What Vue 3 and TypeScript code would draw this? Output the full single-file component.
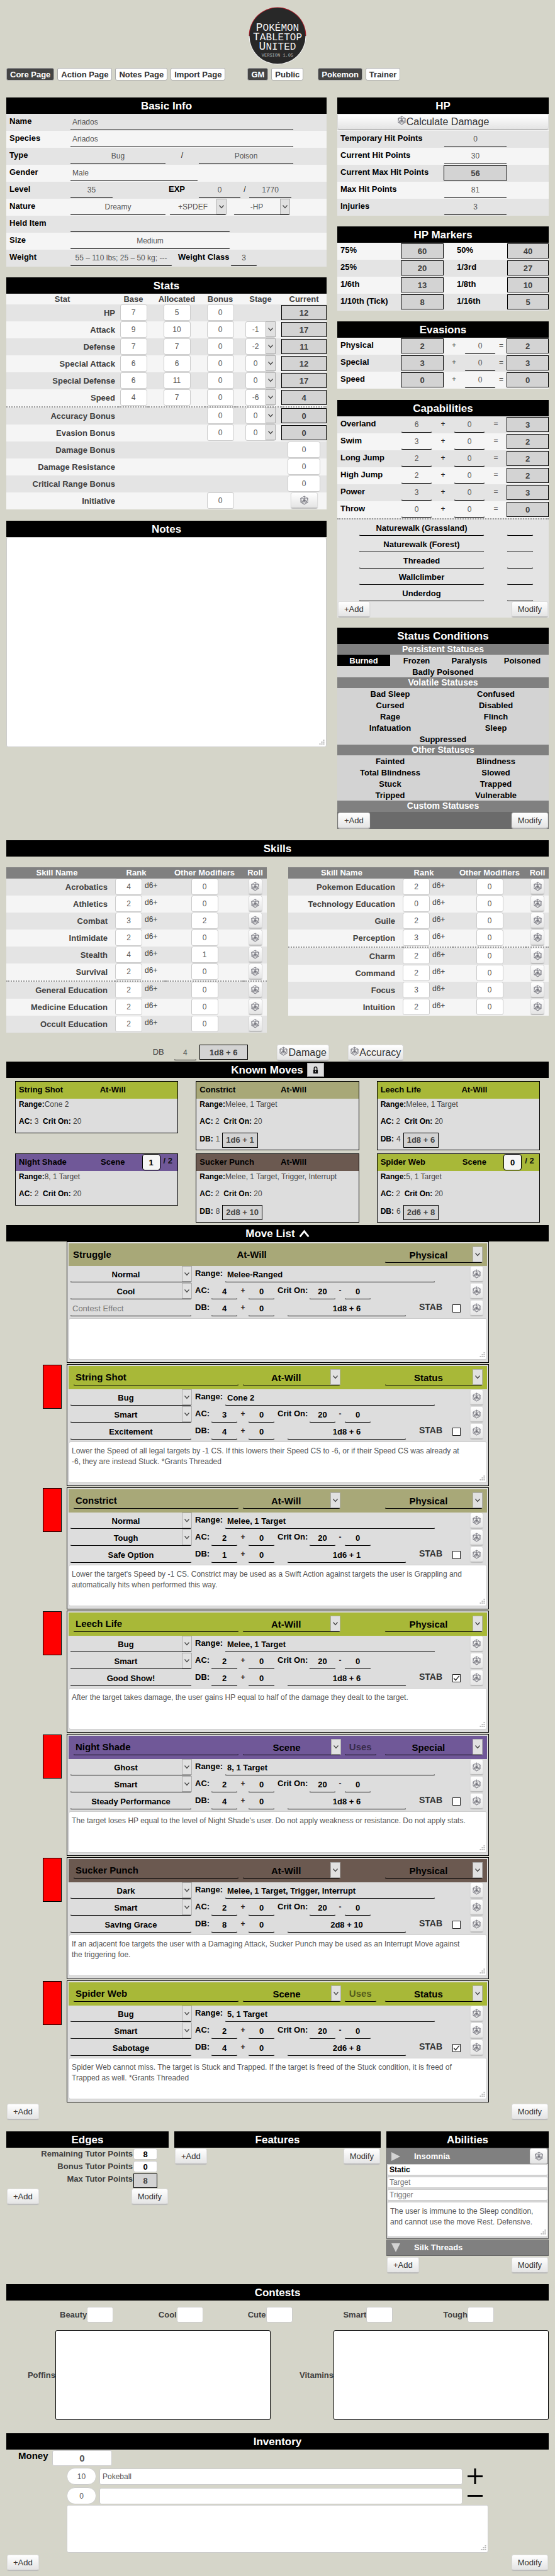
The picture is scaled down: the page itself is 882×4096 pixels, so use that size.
<script setup lang="ts">
interface Skill { name: string; rank: number; mod: number; rule?: boolean }
interface Move {
  name: string; freq: string; cls: string; type: string; tone: string; contest: string; effect: string
  range: string; ac: number; db: number; dice: string; stab: boolean; uses?: boolean; fixed?: boolean; text: string
}
interface Card { name: string; freq: string; tone: string; range: string; ac: number; db?: number; dice?: string; used?: number }

const navGroups = [
  { id: 'pages', items: ['Core Page', 'Action Page', 'Notes Page', 'Import Page'] },
  { id: 'access', items: ['GM', 'Public'] },
  { id: 'kind', items: ['Pokemon', 'Trainer'] },
]

const stats = [
  { name: 'HP', base: 7, alloc: 5, bonus: 0, stage: '', current: 12 },
  { name: 'Attack', base: 9, alloc: 10, bonus: 0, stage: '-1', current: 17 },
  { name: 'Defense', base: 7, alloc: 7, bonus: 0, stage: '-2', current: 11 },
  { name: 'Special Attack', base: 6, alloc: 6, bonus: 0, stage: '0', current: 12 },
  { name: 'Special Defense', base: 6, alloc: 11, bonus: 0, stage: '0', current: 17 },
  { name: 'Speed', base: 4, alloc: 7, bonus: 0, stage: '-6', current: 4 },
]
const rollBonuses = ['Accuracy Bonus', 'Evasion Bonus']
const flatBonuses = ['Damage Bonus', 'Damage Resistance', 'Critical Range Bonus']

const hitPoints = [
  { name: 'Temporary Hit Points', value: 0 },
  { name: 'Current Hit Points', value: 30 },
  { name: 'Current Max Hit Points', value: 56, computed: true },
  { name: 'Max Hit Points', value: 81 },
  { name: 'Injuries', value: 3 },
]
const markers = [
  [{ name: '75%', value: 60 }, { name: '50%', value: 40 }],
  [{ name: '25%', value: 20 }, { name: '1/3rd', value: 27 }],
  [{ name: '1/6th', value: 13 }, { name: '1/8th', value: 10 }],
  [{ name: '1/10th (Tick)', value: 8 }, { name: '1/16th', value: 5 }],
]
const evasions = [
  { name: 'Physical', value: 2 }, { name: 'Special', value: 3 }, { name: 'Speed', value: 0 },
]
const capabilities = [
  { name: 'Overland', base: 6, total: 3 }, { name: 'Swim', base: 3, total: 2 },
  { name: 'Long Jump', base: 2, total: 2 }, { name: 'High Jump', base: 2, total: 2 },
  { name: 'Power', base: 3, total: 3 }, { name: 'Throw', base: 0, total: 0 },
]
const traits = ['Naturewalk (Grassland)', 'Naturewalk (Forest)', 'Threaded', 'Wallclimber', 'Underdog']

const statuses = [
  { title: 'Persistent Statuses', rows: [['Burned', 'Frozen', 'Paralysis', 'Poisoned'], ['Badly Poisoned']] },
  { title: 'Volatile Statuses', rows: [['Bad Sleep', 'Confused'], ['Cursed', 'Disabled'], ['Rage', 'Flinch'], ['Infatuation', 'Sleep'], ['Suppressed']] },
  { title: 'Other Statuses', rows: [['Fainted', 'Blindness'], ['Total Blindness', 'Slowed'], ['Stuck', 'Trapped'], ['Tripped', 'Vulnerable']] },
]

const skillTables: { id: string; skills: Skill[] }[] = [
  { id: 'body-skills', skills: [
    { name: 'Acrobatics', rank: 4, mod: 0 }, { name: 'Athletics', rank: 2, mod: 0 },
    { name: 'Combat', rank: 3, mod: 2 }, { name: 'Intimidate', rank: 2, mod: 0 },
    { name: 'Stealth', rank: 4, mod: 1 }, { name: 'Survival', rank: 2, mod: 0, rule: true },
    { name: 'General Education', rank: 2, mod: 0 }, { name: 'Medicine Education', rank: 2, mod: 0 },
    { name: 'Occult Education', rank: 2, mod: 0 },
  ] },
  { id: 'mind-skills', skills: [
    { name: 'Pokemon Education', rank: 2, mod: 0 }, { name: 'Technology Education', rank: 0, mod: 0 },
    { name: 'Guile', rank: 2, mod: 0 }, { name: 'Perception', rank: 3, mod: 0, rule: true },
    { name: 'Charm', rank: 2, mod: 0 }, { name: 'Command', rank: 2, mod: 0 },
    { name: 'Focus', rank: 3, mod: 0 }, { name: 'Intuition', rank: 2, mod: 0 },
  ] },
]

const cards: Card[] = [
  { name: 'String Shot', freq: 'At-Will', tone: 'bug', range: 'Cone 2', ac: 3 },
  { name: 'Constrict', freq: 'At-Will', tone: 'normal', range: 'Melee, 1 Target', ac: 2, db: 1, dice: '1d6 + 1' },
  { name: 'Leech Life', freq: 'At-Will', tone: 'bug', range: 'Melee, 1 Target', ac: 2, db: 4, dice: '1d8 + 6' },
  { name: 'Night Shade', freq: 'Scene', tone: 'ghost', range: '8, 1 Target', ac: 2, used: 1 },
  { name: 'Sucker Punch', freq: 'At-Will', tone: 'dark', range: 'Melee, 1 Target, Trigger, Interrupt', ac: 2, db: 8, dice: '2d8 + 10' },
  { name: 'Spider Web', freq: 'Scene', tone: 'bug', range: '5, 1 Target', ac: 2, db: 6, dice: '2d6 + 8', used: 0 },
]

const moves: Move[] = [
  { name: 'Struggle', freq: 'At-Will', cls: 'Physical', type: 'Normal', tone: 'normal', contest: 'Cool', effect: '', range: 'Melee-Ranged', ac: 4, db: 4, dice: '1d8 + 6', stab: false, fixed: true, text: '' },
  { name: 'String Shot', freq: 'At-Will', cls: 'Status', type: 'Bug', tone: 'bug', contest: 'Smart', effect: 'Excitement', range: 'Cone 2', ac: 3, db: 4, dice: '1d8 + 6', stab: false, text: 'Lower the Speed of all legal targets by -1 CS. If this lowers their Speed CS to -6, or if their Speed CS was already at\n-6, they are instead Stuck. *Grants Threaded' },
  { name: 'Constrict', freq: 'At-Will', cls: 'Physical', type: 'Normal', tone: 'normal', contest: 'Tough', effect: 'Safe Option', range: 'Melee, 1 Target', ac: 2, db: 1, dice: '1d6 + 1', stab: false, text: "Lower the target's Speed by -1 CS. Constrict may be used as a Swift Action against targets the user is Grappling and\nautomatically hits when performed this way." },
  { name: 'Leech Life', freq: 'At-Will', cls: 'Physical', type: 'Bug', tone: 'bug', contest: 'Smart', effect: 'Good Show!', range: 'Melee, 1 Target', ac: 2, db: 2, dice: '1d8 + 6', stab: true, text: 'After the target takes damage, the user gains HP equal to half of the damage they dealt to the target.' },
  { name: 'Night Shade', freq: 'Scene', cls: 'Special', type: 'Ghost', tone: 'ghost', contest: 'Smart', effect: 'Steady Performance', range: '8, 1 Target', ac: 2, db: 4, dice: '1d8 + 6', stab: false, uses: true, text: "The target loses HP equal to the level of Night Shade's user. Do not apply weakness or resistance. Do not apply stats." },
  { name: 'Sucker Punch', freq: 'At-Will', cls: 'Physical', type: 'Dark', tone: 'dark', contest: 'Smart', effect: 'Saving Grace', range: 'Melee, 1 Target, Trigger, Interrupt', ac: 2, db: 8, dice: '2d8 + 10', stab: false, text: 'If an adjacent foe targets the user with a Damaging Attack, Sucker Punch may be used as an Interrupt Move against\nthe triggering foe.' },
  { name: 'Spider Web', freq: 'Scene', cls: 'Status', type: 'Bug', tone: 'bug', contest: 'Smart', effect: 'Sabotage', range: '5, 1 Target', ac: 2, db: 4, dice: '2d6 + 8', stab: true, uses: true, text: 'Spider Web cannot miss. The target is Stuck and Trapped. If the target is freed of the Stuck condition, it is freed of\nTrapped as well. *Grants Threaded' },
]

const tutorPoints = [{ name: 'Remaining Tutor Points', value: 8 }, { name: 'Bonus Tutor Points', value: 0 }]
const insomnia = 'The user is immune to the Sleep condition,\nand cannot use the move Rest. Defensive.'
const contests = ['Beauty', 'Cool', 'Cute', 'Smart', 'Tough']
const items = [{ qty: 10, name: 'Pokeball' }, { qty: 0, name: '' }]
</script>

<template>
  <svg class="defs" aria-hidden="true">
    <symbol id="d20" viewBox="0 0 16 16">
      <g fill="none" stroke="#6f6f78" stroke-width="0.8" stroke-linejoin="round">
        <path d="M8 1 14 4.5V11.5L8 15 2 11.5V4.5Z" />
        <path d="M8 4.500 11.800 10.800H4.200Z" />
        <path d="M8 1V4.500M14 4.500 8 4.500 2 4.500M14 4.500 11.800 10.800 14 11.500M2 4.500 4.200 10.800 2 11.500M8 15 4.200 10.800M8 15 11.800 10.800" />
        <path d="M8 7 9.500 9.500H6.500Z" stroke-width="1.400" />
      </g>
    </symbol>
    <symbol id="chevron" viewBox="0 0 10 10"><path d="M1.500 3 5 7 8.500 3" fill="none" stroke="#444" stroke-width="1.200" /></symbol>
    <symbol id="grip" viewBox="0 0 9 9"><path d="M6.500 0h2v2h-2zM6.500 3h2v2h-2zM3.500 3h2v2h-2zM6.500 6h2v2h-2zM3.500 6h2v2h-2zM.5 6h2v2h-2z" fill="#bbb" /></symbol>
  </svg>
  <main class="page">
    <svg class="logo" viewBox="0 0 92 92" role="img" aria-label="Pokémon Tabletop United">
      <circle cx="46" cy="46" r="45.500" fill="#f2f2f2" />
      <path d="M0.500 46a45.500 45.500 0 0 1 91 0z" fill="#a8202a" />
      <circle cx="46" cy="46" r="44.500" fill="#282828" />
      <g fill="#f4f4f4" font-family="'Liberation Mono', monospace" text-anchor="middle">
        <text x="46" y="37.500" font-size="16"><tspan font-size="18">P</tspan>OKÉMON</text>
        <text x="46" y="53" font-size="16"><tspan font-size="18">T</tspan>ABLETOP</text>
        <text x="46" y="67.500" font-size="16"><tspan font-size="18">U</tspan>NITED</text>
        <text x="46" y="79" font-size="7" fill="#bbb">VERSION 1.05</text>
      </g>
    </svg>
    <nav class="nav">
      <div v-for="g in navGroups" :key="g.id" :class="['tabs', g.id]">
        <button v-for="(t, i) in g.items" :key="t" type="button" :class="['tab', { on: i === 0 }]">{{ t }}</button>
      </div>
    </nav>

    <div class="core">
      <div>
        <section>
          <h2>Basic Info</h2>
          <div class="stripes info">
            <div class="row r-one"><label for="name">Name</label><input id="name" class="line" value="Ariados"></div>
            <div class="row r-one"><label for="species">Species</label><input id="species" class="line" value="Ariados"></div>
            <div class="row r-type"><label for="type1">Type</label><input id="type1" class="line mid" value="Bug"><span class="sym">/</span><input class="line mid" aria-label="Second type" value="Poison"></div>
            <div class="row r-gender"><label for="gender">Gender</label><input id="gender" class="line" value="Male"></div>
            <div class="row r-level"><label for="level">Level</label><input id="level" class="line mid" value="35"><label for="exp" class="exp">EXP</label><input id="exp" class="line mid" value="0"><span class="sym">/</span><input class="line mid" aria-label="Next level" value="1770"></div>
            <div class="row r-nature">
              <label for="nature">Nature</label><input id="nature" class="line mid" value="Dreamy"><i></i>
              <span class="pick"><select class="line" aria-label="Raised stat"><option>+SPDEF</option></select><svg><use href="#chevron" /></svg></span><i></i>
              <span class="pick"><select class="line" aria-label="Lowered stat"><option>-HP</option></select><svg><use href="#chevron" /></svg></span>
            </div>
            <div class="row r-held"><label for="held">Held Item</label><input id="held" class="line"></div>
            <div class="row r-held"><label for="size">Size</label><input id="size" class="line mid" value="Medium"></div>
            <div class="row r-weight"><label for="weight">Weight</label><input id="weight" class="line mid" value="55 – 110 lbs; 25 – 50 kg; ---"><label for="wclass" class="wc">Weight Class</label><input id="wclass" class="line mid" value="3"></div>
          </div>
        </section>

        <section class="g17">
          <h2>Stats</h2>
          <table class="stats">
            <colgroup><col class="a"><col class="b"><col class="c"><col class="b"><col class="d"><col class="e"></colgroup>
            <thead><tr><th>Stat</th><th>Base</th><th>Allocated</th><th>Bonus</th><th class="st">Stage</th><th>Current</th></tr></thead>
            <tbody>
              <tr v-for="s in stats" :key="s.name" :class="{ rule: s.name === 'Speed' }">
                <th scope="row">{{ s.name }}</th>
                <td><input class="box" :aria-label="s.name + ' base'" :value="s.base"></td>
                <td><input class="box" :aria-label="s.name + ' allocated'" :value="s.alloc"></td>
                <td><input class="box" :aria-label="s.name + ' bonus'" :value="s.bonus"></td>
                <td class="st"><span v-if="s.stage" class="pick small"><select class="box" :aria-label="s.name + ' stage'"><option>{{ s.stage }}</option></select><svg><use href="#chevron" /></svg></span></td>
                <td><input class="calc" readonly :aria-label="s.name + ' current'" :value="s.current"></td>
              </tr>
              <tr v-for="b in rollBonuses" :key="b">
                <th scope="row">{{ b }}</th><td></td><td></td>
                <td><input class="box" :aria-label="b" value="0"></td>
                <td class="st"><span class="pick small"><select class="box" :aria-label="b + ' stage'"><option>0</option></select><svg><use href="#chevron" /></svg></span></td>
                <td><input class="calc" readonly :aria-label="b + ' current'" value="0"></td>
              </tr>
              <tr v-for="b in flatBonuses" :key="b">
                <th scope="row">{{ b }}</th><td></td><td></td><td></td><td></td>
                <td><input class="box wide" :aria-label="b" value="0"></td>
              </tr>
              <tr>
                <th scope="row">Initiative</th><td></td><td></td>
                <td><input class="box" aria-label="Initiative bonus" value="0"></td><td></td>
                <td><button type="button" class="btn roll init" aria-label="Roll initiative"><svg><use href="#d20" /></svg></button></td>
              </tr>
            </tbody>
          </table>
        </section>

        <section class="g18">
          <h2 id="notes-title">Notes</h2>
          <div class="area notes"><textarea aria-labelledby="notes-title"></textarea><svg><use href="#grip" /></svg></div>
        </section>
      </div>

      <div>
        <section>
          <h2>HP</h2>
          <div class="stripes odd">
            <div class="row single"><button type="button" class="btn big"><svg><use href="#d20" /></svg>Calculate Damage</button></div>
            <div v-for="(h, i) in hitPoints" :key="h.name" class="row r-hp">
              <label :for="'hp' + i">{{ h.name }}</label>
              <input :id="'hp' + i" :class="h.computed ? 'calc flat' : 'line mid'" :readonly="h.computed" :value="h.value">
            </div>
          </div>
        </section>
        <section class="g17">
          <h2>HP Markers</h2>
          <div class="stripes odd">
            <div v-for="(pair, i) in markers" :key="i" class="row r-mark">
              <template v-for="(m, j) in pair" :key="m.name">
                <label :for="'mk' + i + j" :class="{ second: j === 1 }">{{ m.name }}</label>
                <input :id="'mk' + i + j" class="calc flat" readonly :value="m.value">
              </template>
            </div>
          </div>
        </section>
        <section class="g17">
          <h2>Evasions</h2>
          <div class="stripes odd">
            <div v-for="(e, i) in evasions" :key="e.name" class="row r-eva">
              <label :for="'ev' + i">{{ e.name }}</label>
              <input :id="'ev' + i" class="calc flat" readonly :value="e.value"><span class="sym">+</span>
              <input class="line mid" :aria-label="e.name + ' bonus'" value="0"><span class="sym">=</span>
              <input class="calc flat" readonly :aria-label="e.name + ' total'" :value="e.value">
            </div>
          </div>
        </section>
        <section class="g18">
          <h2>Capabilities</h2>
          <div class="stripes">
            <div v-for="(c, i) in capabilities" :key="c.name" class="row r-cap">
              <label :for="'cap' + i">{{ c.name }}</label>
              <input :id="'cap' + i" class="line mid" :value="c.base"><span class="sym">+</span>
              <input class="line mid" :aria-label="c.name + ' bonus'" value="0"><span class="sym">=</span>
              <input class="calc flat" readonly :aria-label="c.name + ' total'" :value="c.total">
            </div>
          </div>
          <div class="traits">
            <div v-for="t in traits" :key="t" class="trait">
              <input class="line mid strong" aria-label="Capability" :value="t"><input class="line" :aria-label="t + ' value'">
            </div>
            <div class="ends"><button type="button" class="btn">+Add</button><button type="button" class="btn">Modify</button></div>
          </div>
        </section>
        <section class="g16 status">
          <h2>Status Conditions</h2>
          <template v-for="s in statuses" :key="s.title">
            <h3>{{ s.title }}</h3>
            <div v-for="(r, i) in s.rows" :key="i" class="srow">
              <button v-for="c in r" :key="c" type="button" :class="{ on: c === 'Burned' }">{{ c }}</button>
            </div>
          </template>
          <h3 class="tall">Custom Statuses</h3>
          <div class="ends dim"><button type="button" class="btn">+Add</button><button type="button" class="btn">Modify</button></div>
        </section>
      </div>
    </div>

    <section class="g18">
      <h2>Skills</h2>
      <div class="skills">
        <table v-for="t in skillTables" :key="t.id" :class="['skill', t.id]">
          <colgroup><col class="a"><col class="b"><col class="c"><col class="d"></colgroup>
          <thead><tr><th class="nm">Skill Name</th><th class="rk">Rank</th><th>Other Modifiers</th><th>Roll</th></tr></thead>
          <tbody>
            <tr v-for="s in t.skills" :key="s.name" :class="{ rule: s.rule }">
              <th scope="row" class="nm">{{ s.name }}</th>
              <td><div class="rank"><input class="box" :aria-label="s.name + ' rank'" :value="s.rank"><span>d6+</span></div></td>
              <td><input class="box" :aria-label="s.name + ' modifier'" :value="s.mod"></td>
              <td><button type="button" class="btn roll" :aria-label="'Roll ' + s.name"><svg><use href="#d20" /></svg></button></td>
            </tr>
          </tbody>
        </table>
      </div>
    </section>

    <div class="dbrow">
      <label for="db">DB</label><input id="db" class="line mid" value="4">
      <input class="calc flat" readonly aria-label="Damage roll" value="1d8 + 6">
      <button type="button" class="btn big dmg"><svg><use href="#d20" /></svg>Damage</button>
      <button type="button" class="btn big acc"><svg><use href="#d20" /></svg>Accuracy</button>
    </div>

    <section>
      <h2>Known Moves
        <button type="button" class="lock" aria-label="Lock"><svg viewBox="0 0 10 14"><path d="M2.500 7V4a2.500 2.500 0 0 1 5 0v3" fill="none" stroke="#111" stroke-width="1.600" /><path d="M1 6.500h8V13H1z" fill="#111" /><path d="M4.500 8.500h1v2.500h-1z" fill="#ddd" /></svg></button>
      </h2>
      <div class="cards">
        <article v-for="(c, i) in cards" :key="c.name" class="card">
          <header :class="c.tone">
            <span>{{ c.name }}</span><span class="fq">{{ c.freq }}</span>
            <span v-if="c.used !== undefined" class="used"><input :id="'used' + i" :aria-label="c.name + ' uses'" :value="c.used"><label :for="'used' + i">/ 2</label></span>
          </header>
          <p><b>Range:</b>{{ c.range }}</p>
          <p><b>AC:</b> {{ c.ac }} &nbsp;<b>Crit On:</b> 20</p>
          <p v-if="c.dice" class="dice"><b>DB:</b> {{ c.db }} <output>{{ c.dice }}</output></p>
        </article>
      </div>
    </section>

    <section>
      <h2>Move List <svg class="up" viewBox="0 0 16 12"><path d="M1.500 10.500 8 2.500l6.500 8" fill="none" stroke="#fff" stroke-width="2.600" /></svg></h2>
      <div v-for="(m, i) in moves" :key="m.name" class="entry">
        <button v-if="!m.fixed" type="button" class="red" :aria-label="'Mark ' + m.name"></button>
        <article :class="['move', { fixed: m.fixed }]">
          <header :class="m.tone">
            <template v-if="m.fixed"><strong>{{ m.name }}</strong><strong class="fx">{{ m.freq }}</strong></template>
            <template v-else>
              <input class="line nm" aria-label="Move name" :value="m.name">
              <span class="pick fq"><select class="line" aria-label="Frequency"><option>{{ m.freq }}</option></select><svg><use href="#chevron" /></svg></span>
              <input v-if="m.uses" class="line mid us" aria-label="Uses" placeholder="Uses">
            </template>
            <span class="pick cl"><select class="line" aria-label="Class"><option>{{ m.cls }}</option></select><svg><use href="#chevron" /></svg></span>
          </header>
          <div class="mrow m1">
            <span class="pick"><select class="line" aria-label="Type"><option>{{ m.type }}</option></select><svg><use href="#chevron" /></svg></span>
            <label :for="'rg' + i">Range:</label><input :id="'rg' + i" class="line" :value="m.range"><i></i>
            <button type="button" class="btn roll" aria-label="Roll"><svg><use href="#d20" /></svg></button>
          </div>
          <div class="mrow m2">
            <span class="pick"><select class="line" aria-label="Contest type"><option>{{ m.contest }}</option></select><svg><use href="#chevron" /></svg></span>
            <label :for="'ac' + i">AC:</label><input :id="'ac' + i" class="line mid" :value="m.ac"><span class="sym">+</span><input class="line mid" aria-label="AC bonus" value="0">
            <label :for="'cr' + i" class="crit">Crit On:</label><input :id="'cr' + i" class="line mid" value="20"><span class="sym">-</span><input class="line mid" aria-label="Crit bonus" value="0"><i></i>
            <button type="button" class="btn roll" aria-label="Roll accuracy"><svg><use href="#d20" /></svg></button>
          </div>
          <div class="mrow m3">
            <input class="line mid ef" aria-label="Contest Effect" placeholder="Contest Effect" :value="m.effect">
            <label :for="'db' + i">DB:</label><input :id="'db' + i" class="line mid" :value="m.db"><span class="sym">+</span><input class="line mid" aria-label="DB bonus" value="0"><i></i>
            <input class="line mid" aria-label="Damage" :value="m.dice"><i></i><label :for="'st' + i" class="stab">STAB</label><i></i>
            <span class="tick"><input :id="'st' + i" type="checkbox" :checked="m.stab"><svg viewBox="0 0 12 12"><path d="M2 6 4.700 9 10 2.500" fill="none" stroke="#222" stroke-width="1.200" /></svg></span>
            <button type="button" class="btn roll" aria-label="Roll damage"><svg><use href="#d20" /></svg></button>
          </div>
          <div class="area desc"><textarea :aria-label="m.name + ' description'" :value="m.text"></textarea><svg><use href="#grip" /></svg></div>
        </article>
      </div>
      <div class="ends"><button type="button" class="btn">+Add</button><button type="button" class="btn">Modify</button></div>
    </section>

    <div class="trio">
      <section>
        <h2>Edges</h2>
        <div class="tutor">
          <template v-for="(t, i) in tutorPoints" :key="t.name"><label :for="'tp' + i">{{ t.name }}</label><input :id="'tp' + i" class="box slim" :value="t.value"></template>
          <label for="tpmax">Max Tutor Points</label><input id="tpmax" class="calc flat" readonly value="8">
        </div>
        <div class="ends"><button type="button" class="btn">+Add</button><button type="button" class="btn">Modify</button></div>
      </section>
      <section>
        <h2>Features</h2>
        <div class="ends top"><button type="button" class="btn">+Add</button><button type="button" class="btn">Modify</button></div>
      </section>
      <section>
        <h2>Abilities</h2>
        <div class="ability">
          <div class="abar"><svg viewBox="0 0 14 14"><path d="M0 0 14 7 0 14z" fill="#d3d3d3" /></svg><span>Insomnia</span><button type="button" class="btn roll" aria-label="Roll Insomnia"><svg><use href="#d20" /></svg></button></div>
          <input class="box slim key" aria-label="Frequency" value="Static">
          <input class="box slim" aria-label="Target" placeholder="Target">
          <input class="box slim" aria-label="Trigger" placeholder="Trigger">
          <div class="area abtext"><textarea aria-label="Insomnia effect" :value="insomnia"></textarea><svg><use href="#grip" /></svg></div>
        </div>
        <div class="ability closed"><div class="abar"><svg viewBox="0 0 14 14"><path d="M0 0h14L7 14z" fill="#d3d3d3" /></svg><span>Silk Threads</span></div></div>
        <div class="ends abends"><button type="button" class="btn">+Add</button><button type="button" class="btn">Modify</button></div>
      </section>
    </div>

    <section class="g18">
      <h2>Contests</h2>
      <div class="contests"><div v-for="c in contests" :key="c"><label :for="'ct' + c">{{ c }}</label><input :id="'ct' + c" class="box"></div></div>
      <div class="treats">
        <label for="poffins">Poffins</label><textarea id="poffins"></textarea>
        <label for="vitamins">Vitamins</label><textarea id="vitamins"></textarea>
      </div>
    </section>

    <section class="g21">
      <h2>Inventory</h2>
      <div class="money"><label for="money">Money</label><input id="money" class="box" value="0"></div>
      <div class="inv">
        <div v-for="(it, i) in items" :key="i" class="item">
          <input class="box qty" aria-label="Quantity" :value="it.qty"><input class="box nm" aria-label="Item" :value="it.name">
          <button type="button" class="pm" :aria-label="i ? 'Remove item' : 'Add item'">
            <svg viewBox="0 0 24 25"><path :d="i ? 'M0 11h24v3H0z' : 'M0 11h10.500V0h3v11H24v3H13.500v11h-3V14H0z'" fill="#000" /></svg>
          </button>
        </div>
        <div class="area invtext"><textarea aria-label="Inventory notes"></textarea><svg><use href="#grip" /></svg></div>
      </div>
      <div class="ends invends"><button type="button" class="btn">+Add</button><button type="button" class="btn">Modify</button></div>
    </section>
  </main>
</template>

<style>
html, body { background: #d5d5c9; }
</style>

<style scoped>
* { box-sizing: border-box; }
.defs { position: absolute; width: 0; height: 0; }
.page { padding: 11px 10px; background: #d5d5c9; color: #404040; font: 13px/18px "Liberation Sans", Arial, sans-serif; }
input, select, textarea, button { font: 12px "Liberation Sans", Arial, sans-serif; color: #555; margin: 0; min-width: 0; border-radius: 3px; }
label, th { font-weight: bold; }
h2 { margin: 0; height: 26px; background: #000; color: #fff; font-size: 17px; line-height: 25px; text-align: center; display: flex; justify-content: center; align-items: center; gap: 6px; }
.g16 { margin-top: 16px; }
.g17 { margin-top: 17px; }
.g18 { margin-top: 18px; }
.g21 { margin-top: 21px; }

.logo { display: block; width: 92px; height: 92px; margin: 0 auto; }
.nav { display: flex; margin: 5px 0 27px; }
.tabs { display: flex; gap: 5px; }
.tabs.access { margin-left: 35px; }
.tabs.kind { margin-left: 23px; }
.tab { height: 20px; padding: 0 5px; border: 1px solid #aaa; background: #fff; color: #333; font-size: 13px; font-weight: bold; }
.tab.on { background: #444; color: #fff; }

.core { display: grid; grid-template-columns: minmax(0, 509fr) minmax(0, 336fr); gap: 17px; align-items: start; }
.row { display: grid; height: 27px; background: #f5f5f5; color: #000; }
.stripes .row:nth-child(odd) { background: #e4e4e4; }
.stripes.odd .row:nth-child(odd) { background: #f5f5f5; }
.stripes.odd .row:nth-child(even) { background: #e4e4e4; }
.row label { min-width: 0; padding-left: 5px; line-height: 24px; white-space: nowrap; }
.sym { text-align: center; line-height: 24px; }
.row .sym, .mrow .sym { font-size: 12px; color: #222; font-weight: bold; }
.row .sym { font-weight: normal; }

.line { width: 100%; height: 26px; padding: 0 3px; border: 1px solid transparent; border-bottom-color: #000; background: transparent; }
.mid { text-align: center; }
.box { display: block; width: 43px; height: 26px; margin: 0 auto; padding: 0; border: 1px solid #ccc; background: #fff; text-align: center; }
.calc { display: block; width: 100%; height: 24px; border: 1px solid #000; border-radius: 0; background: #d3d3d3; color: #404040; font-size: 13px; font-weight: bold; text-align: center; padding: 0; }
.pick { display: grid; grid-template-columns: minmax(0, 1fr) 16px; min-width: 0; }
.pick select { grid-area: 1 / 1 / 2 / 3; appearance: none; text-align: center; text-align-last: center; padding: 0 16px 0 0; width: 100%; }
.pick svg { grid-area: 1 / 2; width: 16px; height: 25px; padding: 0 2px; background: #e1e1e1; border: 1px solid #adadad; pointer-events: none; }
.btn { display: flex; align-items: center; justify-content: center; height: 25px; border: 1px solid #ddd; border-bottom-color: #bbb; background: linear-gradient(#fff, #e4e4e4); box-shadow: 0 1px 1px #bbb; color: #333; font-size: 13px; padding: 0 9px; white-space: nowrap; }
.btn.big { font-size: 16px; padding: 0 2px; }
.btn svg { width: 15px; height: 15px; flex: none; }
.btn.big svg { margin-bottom: 4px; }
.btn.roll { width: 22px; padding: 0; margin: 0 auto; }

.r-one { grid-template-columns: 101fr 356fr 52fr; }
.r-type { grid-template-columns: 101fr 153fr 51fr 152fr 52fr; }
.r-gender { grid-template-columns: 101fr 204fr 204fr; }
.r-level { grid-template-columns: 101fr 69fr 135fr 68fr 12fr 69fr 55fr; }
.row .exp { text-align: right; padding-right: 21px; }
.r-nature { grid-template-columns: 101fr 153fr 5fr 91fr 11fr 90fr 58fr; }
.r-held { grid-template-columns: 101fr 255fr 153fr; }
.r-weight { grid-template-columns: 101fr 163fr 92fr 43fr 110fr; }
.row .wc { padding-left: 9px; }

table { width: 100%; border-collapse: separate; border-spacing: 0; table-layout: fixed; }
td, th { padding: 0; vertical-align: middle; }
td { vertical-align: top; }
tbody tr { height: 27px; background: #f5f5f5; }
tbody tr:nth-child(odd) { background: #e4e4e4; }
tbody tr.rule > * { border-bottom: 2px dotted #999; }
tbody tr.rule { height: 29px; }
.stats thead th { height: 17px; line-height: 17px; background: #f5f5f5; }
.stats tbody th { text-align: right; padding-right: 5px; white-space: nowrap; }
.stats .a { width: 178px; }
.stats .b { width: 48px; }
.stats .c { width: 90px; }
.stats .d { width: 73px; }
.stats .e { width: 72px; }
.stats .st { padding-left: 7px; }
.stats .calc { margin-top: 1px; }
.box.wide { width: 52px; }
.small { width: 48px; margin: 0 auto; }
.btn.init { width: 43px; }

.area { display: grid; }
.area textarea { grid-area: 1 / 1; width: 100%; height: 100%; resize: none; border: 1px solid #ccc; background: #fff; padding: 6px 4px; font-size: 12px; line-height: 17px; overflow: hidden; }
.area svg { grid-area: 1 / 1; place-self: end; width: 9px; height: 9px; margin: 0 3px 3px 0; pointer-events: none; }
.notes { height: 334px; }

.single .btn { width: 100%; }
.r-hp { grid-template-columns: 169fr 101fr 66fr; }
.r-mark { grid-template-columns: 101fr 68fr 101fr 66fr; }
.row .second { padding-left: 21px; }
.r-eva { grid-template-columns: 101fr 68fr 33fr 50fr 17fr 67fr; }
.r-cap { grid-template-columns: 101fr 50fr 34fr 50fr 34fr 67fr; }
.row .calc { margin-top: 1px; }
.traits { background: #e4e4e4; border-top: 2px dotted #999; }
.trait { display: grid; grid-template-columns: 200fr 43fr; column-gap: 35px; padding: 0 24px 0 34px; height: 26px; }
.strong { font-size: 13px; font-weight: bold; color: #000; }
.ends { display: flex; justify-content: space-between; padding: 0 1px; }
.traits .ends { height: 26px; }
.status h3 { margin: 0; height: 17px; background: #808080; color: #fff; font-size: 14px; line-height: 17px; text-align: center; }
.status h3.tall { height: 18px; }
.srow { display: flex; background: #d3d3d3; }
.srow button { flex: 1; height: 18px; padding: 0; border: 0; border-radius: 0; background: none; color: #000; font-size: 13px; font-weight: bold; }
.srow .on { background: #000; color: #fff; }
.ends.dim { background: #6b6b6b; height: 27px; padding-top: 1px; }

.skills { display: grid; grid-template-columns: minmax(0, 1fr) minmax(0, 1fr); gap: 34px; padding-top: 17px; align-items: start; }
.skill thead th { height: 18px; line-height: 18px; background: #808080; color: #fff; white-space: nowrap; }
.body-skills .a { width: 173px; }
.body-skills .b { width: 80px; }
.body-skills .c { width: 124px; }
.body-skills .d { width: 37px; }
.mind-skills .a { width: 182px; }
.mind-skills .b { width: 80px; }
.mind-skills .c { width: 116px; }
.mind-skills .d { width: 36px; }
.skill .nm { padding-right: 12px; }
.skill .rk { padding-right: 13px; }
.skill tbody .nm { text-align: right; white-space: nowrap; }
.rank { display: flex; gap: 4px; line-height: 23px; }
.rank span { font-size: 12px; }
.rank .box { margin: 0; }

.dbrow { display: flex; align-items: flex-start; margin: 19px 0 2px; padding-left: 27%; height: 25px; }
.dbrow label { width: 33px; font-weight: normal; line-height: 24px; padding-right: 16px; }
.dbrow .line { width: 37px; height: 25px; }
.dbrow .calc { width: 77px; margin-left: 4px; }
.dmg { margin-left: 46px; width: 83px; }
.acc { margin-left: 30px; width: 88px; }
.lock { width: 27px; height: 22px; display: grid; place-items: center; padding: 0; border: 1px solid #aaa; border-radius: 0; background: #ddd; }
.lock svg { width: 9px; height: 13px; }
.up { width: 17px; height: 13px; }

.bug { background: #a8b838; }
.normal { background: #a8a878; }
.ghost { background: #705898; }
.dark { background: #6b5950; }
.cards { display: grid; grid-template-columns: repeat(3, 1fr); gap: 5px 28px; padding: 5px 14px 4px; align-items: start; }
.card { border: 1px solid #000; background: #ddd; }
.card header { display: grid; grid-template-columns: 112fr 80fr 65fr; height: 27px; line-height: 25px; color: #000; font-weight: bold; padding-left: 5px; white-space: nowrap; }
.card .fq { text-align: center; }
.used { display: flex; gap: 5px; line-height: 22px; padding-left: 7px; }
.used input { width: 29px; height: 26px; border: 1px solid #000; border-radius: 4px; background: #f5f5f5; color: #000; font-size: 13px; font-weight: bold; text-align: center; padding: 0; }
.used label { color: #111; }
.card p { margin: 0 0 9px; padding-left: 5px; height: 18px; font-size: 12px; color: #444; white-space: nowrap; }
.card b { color: #000; }
.card .dice { height: 24px; margin-bottom: 3px; display: flex; gap: 4px; line-height: 21px; }
.card output { border: 1px solid #000; background: #d3d3d3; padding: 0 5px; font-size: 13px; font-weight: bold; line-height: 22px; }

.entry { display: grid; grid-template-columns: 96fr 671fr 95fr; margin-bottom: 2px; }
.red { grid-column: 1; justify-self: end; width: 30px; height: 70px; margin: 1px 8px 0 0; border: 1px solid #000; border-radius: 0; background: #f00; padding: 0; }
.move { grid-column: 2; border: 1px solid #000; background: #ddd; padding: 2px 2px 4px; color: #000; }
.move header { display: flex; padding: 5px 7px 6px; height: 37px; }
.move.fixed header { height: 36px; }
.move header .line, .move header strong { font-size: 15px; font-weight: bold; color: #000; line-height: 26px; }
.move header strong { width: 40%; }
.move header .fx { width: auto; }
.move .nm { flex: 257; width: auto; margin-right: 5px; }
.move .fq { width: 24%; }
.move .us { width: 8%; margin-left: 5px; padding: 0; }
.us::placeholder { color: #000; opacity: 0.5; }
.move .cl { width: 24%; margin-left: 12px; }
.move .fq:nth-last-child(2) { margin-right: 58px; }
.move .fx + .cl { margin-left: auto; }
.mrow { display: grid; height: 27px; padding: 0 6px 0 2px; white-space: nowrap; }
.mrow > :first-child { margin-right: 5px; }
.mrow label { line-height: 24px; }
.mrow .line { font-size: 13px; font-weight: bold; color: #000; }
.mrow input.ef { width: auto; }
.ef::placeholder { font-weight: normal; color: #777; opacity: 1; }
.ef:placeholder-shown { text-align: left; }
.m1 { grid-template-columns: 199fr 47fr 335fr 55fr 21fr; }
.m2 { grid-template-columns: 199fr 25fr 43fr 16fr 43fr 54fr 43fr 13fr 43fr 157fr 21fr; }
.m3 { grid-template-columns: 199fr 25fr 43fr 16fr 43fr 19fr 190fr 20fr 40fr 13fr 28fr 21fr; }
.mrow .crit { padding-left: 4px; }
.mrow .stab { font-size: 14px; color: #333; line-height: 22px; }
.mrow .btn.roll { width: 21px; }
.tick { display: grid; align-content: center; justify-content: start; }
.tick input { grid-area: 1 / 1; appearance: none; width: 13px; height: 13px; border: 1px solid #222; border-radius: 0; background: #fff; }
.tick svg { grid-area: 1 / 1; width: 13px; height: 13px; visibility: hidden; pointer-events: none; }
.tick input:checked + svg { visibility: visible; }
.desc { height: 66px; margin-top: 2px; }

.trio { display: grid; grid-template-columns: 258fr 328fr 258fr; gap: 9px; margin-top: 19px; align-items: start; }
.tutor { display: grid; grid-template-columns: 1fr 38px; padding: 1px 18px 1px 0; row-gap: 2px; text-align: right; }
.tutor .box { width: 100%; color: #000; font-weight: bold; font-size: 13px; }
.tutor label { padding-right: 1px; }
.tutor .calc { height: 23px; }
.slim { height: 18px; }
.top { padding-top: 1px; }
.ability { border: 1px solid #666; background: #d5d5d5; padding-bottom: 2px; display: grid; gap: 2px; }
.abar { display: grid; grid-template-columns: 36px 1fr 30px; align-items: center; height: 25px; margin-bottom: -2px; padding-left: 7px; background: #808080; color: #fff; font-weight: bold; }
.abar > svg { width: 14px; height: 14px; }
.ability .slim { width: 100%; text-align: left; padding: 0 3px; }
.ability .key { color: #000; font-weight: bold; }
.ability .slim::placeholder { color: #777; }
.abar .btn.roll { width: 28px; }
.abtext { height: 56px; }
.closed { margin-top: 1px; padding: 0; }
.closed .abar { height: 24px; margin: 0; }
.abends { padding-top: 2px; }

.contests { display: grid; grid-template-columns: 157fr 142fr 152fr 159fr 80fr; padding: 10px 87px 0 85px; }
.contests div { display: flex; line-height: 26px; }
.contests .box { margin: 0; width: 42px; height: 25px; }
.treats { display: grid; grid-template-columns: 78fr 342fr 100fr 342fr; margin-top: 11px; align-items: center; text-align: right; }
.treats textarea { height: 143px; border: 1px solid #000; resize: none; width: 100%; background: #fff; }

.money { display: flex; padding: 1px 0 3px 19px; }
.money label { font-size: 15px; color: #000; width: 54px; }
.money .box { width: 95px; height: 25px; margin: 0; font-size: 15px; font-weight: bold; }
.inv { display: grid; margin: 0 96px; }
.item { display: grid; grid-template-columns: 47px 1fr 24px; column-gap: 5px; padding-right: 12px; height: 27px; margin-bottom: 4px; align-items: center; }
.item .qty { width: 47px; height: 27px; border-radius: 13px; }
.item .nm { width: 100%; text-align: left; padding: 0 4px; }
.item + .item { margin-bottom: 1px; }
.pm { display: block; width: 24px; height: 25px; padding: 0; border: 0; background: none; margin-left: 3px; }
.pm svg { display: block; width: 24px; height: 25px; }
.invtext { height: 76px; }
.invends { padding-top: 3px; }
</style>
